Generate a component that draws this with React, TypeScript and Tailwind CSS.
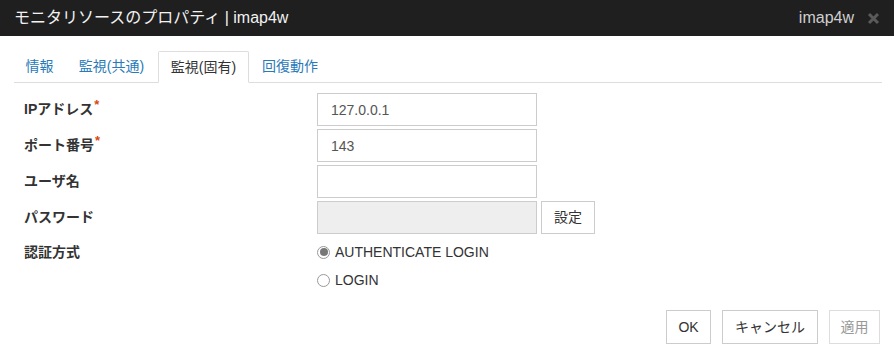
import React from "react";

const font = {
  fontFamily: '"Liberation Sans", "Noto Sans CJK JP", sans-serif',
};

const tabs = [
  { label: "情報", active: false, w: "w-[51px]" },
  { label: "監視(共通)", active: false, w: "w-[93px]" },
  { label: "監視(固有)", active: true, w: "w-[91px]" },
  { label: "回復動作", active: false, w: "w-[82px]" },
];

function Label({ text, required }: { text: string; required?: boolean }) {
  return (
    <div className="flex h-[33px] items-center text-[14px] font-bold text-[#333]">
      {text}
      {required && (
        <span className="relative -top-[5px] ml-[1px] text-[13px] text-[#d9480f]">
          *
        </span>
      )}
    </div>
  );
}

function Radio({ label, checked }: { label: string; checked?: boolean }) {
  return (
    <label className="flex items-center gap-[5px] text-[14px] text-[#333]">
      <span className="flex h-[13px] w-[13px] items-center justify-center rounded-full border border-[#999] bg-white">
        {checked && <span className="h-[8px] w-[8px] rounded-full bg-[#777]" />}
      </span>
      {label}
    </label>
  );
}

export default function App() {
  return (
    <div className="h-[347px] w-[894px] bg-white" style={font}>
      <div className="flex h-[36px] items-center justify-between bg-[#1f1f1f] pl-[14px] pr-[14px]">
        <span className="text-[16px] text-[#f2f2f2]">モニタリソースのプロパティ | imap4w</span>
        <div className="flex items-center gap-[13px]">
          <span className="text-[16px] text-[#cfcfcf]">imap4w</span>
          <svg width="13" height="13" viewBox="0 0 13 13">
            <path d="M2 2 L11 11 M11 2 L2 11" stroke="#5a5a5a" strokeWidth="3" />
          </svg>
        </div>
      </div>

      <div className="px-[14px] pr-[12px] pt-[15px]">
        <div className="flex h-[32px] items-end border-b border-[#ddd]">
          {tabs.map((t) =>
            t.active ? (
              <div
                key={t.label}
                className={`${t.w} -mb-[1px] flex h-[32px] items-center justify-center rounded-t-[2px] border border-b-white border-[#ddd] bg-white text-[14px] text-[#333]`}
              >
                {t.label}
              </div>
            ) : (
              <div
                key={t.label}
                className={`${t.w} flex h-[31px] items-center justify-center text-[14px] text-[#2a7ab8]`}
              >
                {t.label}
              </div>
            )
          )}
        </div>

        <div className="mt-[10px] grid grid-cols-[293px_1fr] gap-y-[3px] pl-[10px]">
          <Label text="IPアドレス" required />
          <input
            readOnly
            value="127.0.0.1"
            className="h-[33px] w-[220px] border border-[#ccc] px-[13px] text-[14px] text-[#555] outline-none"
          />
          <Label text="ポート番号" required />
          <input
            readOnly
            value="143"
            className="h-[33px] w-[220px] border border-[#ccc] px-[13px] text-[14px] text-[#555] outline-none"
          />
          <Label text="ユーザ名" />
          <input
            readOnly
            value=""
            className="h-[33px] w-[220px] border border-[#ccc] px-[13px] text-[14px] text-[#555] outline-none"
          />
          <Label text="パスワード" />
          <div className="flex gap-[4px]">
            <input
              readOnly
              disabled
              className="h-[33px] w-[220px] border border-[#ccc] bg-[#eee] px-[13px] text-[14px] outline-none"
            />
            <button className="h-[33px] w-[54px] border border-[#ccc] bg-white text-[14px] text-[#333]">
              設定
            </button>
          </div>
          <div className="flex h-[30px] items-center text-[14px] font-bold text-[#333]">
            認証方式
          </div>
          <div className="flex flex-col">
            <div className="flex h-[30px] items-center">
              <Radio label="AUTHENTICATE LOGIN" checked />
            </div>
            <div className="flex h-[26px] items-center">
              <Radio label="LOGIN" />
            </div>
          </div>
        </div>

        <div className="mt-[17px] flex justify-end gap-[11px] pr-[2px]">
          <button className="h-[34px] w-[45px] border border-[#ccc] bg-white text-[14px] text-[#333]">
            OK
          </button>
          <button className="h-[34px] w-[96px] border border-[#ccc] bg-white text-[14px] text-[#333]">
            キャンセル
          </button>
          <button className="h-[34px] w-[51px] border border-[#ddd] bg-white text-[14px] text-[#999]">
            適用
          </button>
        </div>
      </div>
    </div>
  );
}
